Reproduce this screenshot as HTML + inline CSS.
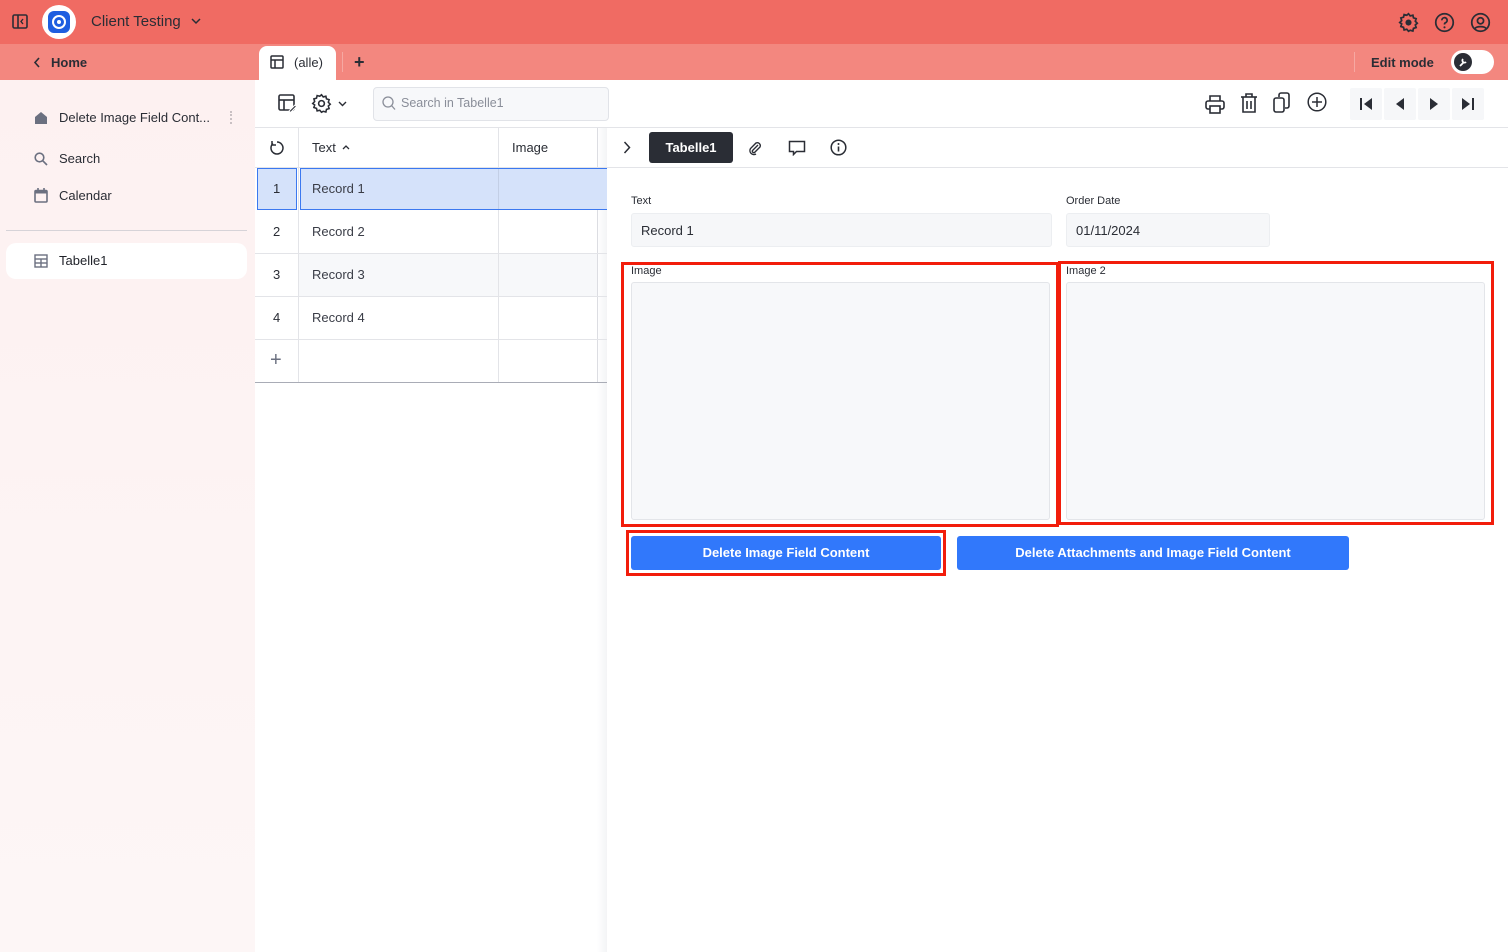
<!DOCTYPE html>
<html><head><meta charset="utf-8"><style>
*{box-sizing:border-box;margin:0;padding:0}
body{width:1508px;height:952px;overflow:hidden;font-family:"Liberation Sans",sans-serif;color:#2a2d35;background:#fff;position:relative;font-size:13px}
.abs{position:absolute}
svg{display:block}
</style></head><body>
<div class="abs" style="left:0;top:0;width:1508px;height:44px;background:#f06b63"></div>
<div class="abs" style="left:0;top:44px;width:1508px;height:36px;background:#f3877f"></div>
<svg class="abs" style="left:12px;top:14px" width="17" height="16" viewBox="0 0 17 16"><rect x="1" y="1" width="14" height="13" rx="1.5" fill="none" stroke="#2a2d35" stroke-width="1.6"/><line x1="6" y1="1" x2="6" y2="14" stroke="#2a2d35" stroke-width="1.6"/><path d="M11 5l-2 2.5 2 2.5" fill="none" stroke="#2a2d35" stroke-width="1.4"/></svg>
<div class="abs" style="left:42px;top:5px;width:34px;height:34px;border-radius:50%;background:#fff"></div>
<div class="abs" style="left:48px;top:11px;width:22px;height:22px;border-radius:6px;background:#1e5ee0"></div>
<div class="abs" style="left:52px;top:15px;width:14px;height:14px;border-radius:50%;border:2.5px solid #fff"></div>
<div class="abs" style="left:57px;top:20px;width:4px;height:4px;border-radius:50%;background:#fff"></div>
<div class="abs" style="left:91px;top:13px;font-size:15px;color:#2a2d35">Client Testing</div>
<svg class="abs" style="left:191px;top:18px" width="10" height="7"><path d="M1 1l4 4 4-4" fill="none" stroke="#2a2d35" stroke-width="1.5"/></svg>
<svg class="abs" style="left:1398px;top:12px" width="21" height="21" viewBox="0 0 24 24"><path d="M12 2l2 2.5 3-.8.7 3 3 .9-.9 3 2.2 2.2-2.2 2 .9 3-3 .9-.7 3-3-.8L12 22l-2-2.3-3 .8-.7-3-3-.9.9-3L2 12l2.2-2.2-.9-3 3-.9.7-3 3 .8z" fill="none" stroke="#2a2d35" stroke-width="2"/><circle cx="12" cy="12" r="3.5" fill="#2a2d35"/></svg>
<svg class="abs" style="left:1434px;top:12px" width="21" height="21" viewBox="0 0 24 24"><circle cx="12" cy="12" r="10" fill="none" stroke="#2a2d35" stroke-width="2"/><path d="M9 9.5a3 3 0 1 1 4 2.8c-.8.4-1 1-1 2" fill="none" stroke="#2a2d35" stroke-width="2"/><circle cx="12" cy="17.5" r="1.2" fill="#2a2d35"/></svg>
<svg class="abs" style="left:1470px;top:12px" width="21" height="21" viewBox="0 0 24 24"><circle cx="12" cy="12" r="10" fill="none" stroke="#2a2d35" stroke-width="2"/><circle cx="12" cy="10" r="3.5" fill="none" stroke="#2a2d35" stroke-width="2"/><path d="M5.5 19c2-3 11-3 13 0" fill="none" stroke="#2a2d35" stroke-width="2"/></svg>
<svg class="abs" style="left:33px;top:57px" width="8" height="11"><path d="M6 1L2 5.5 6 10" fill="none" stroke="#2a2d35" stroke-width="1.6"/></svg>
<div class="abs" style="left:51px;top:55px;font-size:13px;font-weight:bold;color:#2a2d35">Home</div>
<div class="abs" style="left:259px;top:46px;width:77px;height:34px;background:#fff;border-radius:8px 8px 0 0"></div>
<svg class="abs" style="left:270px;top:55px" width="14" height="14"><rect x="1" y="1" width="12" height="12" rx="1" fill="none" stroke="#2a2d35" stroke-width="1.5"/><line x1="1" y1="5" x2="13" y2="5" stroke="#2a2d35" stroke-width="1.5"/><line x1="5" y1="5" x2="5" y2="13" stroke="#2a2d35" stroke-width="1.5"/></svg>
<div class="abs" style="left:294px;top:55px;font-size:13px;color:#2a2d35">(alle)</div>
<div class="abs" style="left:342px;top:52px;width:1px;height:20px;background:#f6a8a2"></div>
<div class="abs" style="left:354px;top:52px;font-size:18px;font-weight:bold;color:#2a2d35">+</div>
<div class="abs" style="left:1354px;top:52px;width:1px;height:20px;background:#f6a8a2"></div>
<div class="abs" style="left:1371px;top:55px;font-size:13px;font-weight:bold;color:#2a2d35">Edit mode</div>
<div class="abs" style="left:1451px;top:50px;width:43px;height:24px;border-radius:12px;background:#fff"></div>
<div class="abs" style="left:1454px;top:53px;width:18px;height:18px;border-radius:50%;background:#2a2d35"></div>
<svg class="abs" style="left:1457px;top:56px" width="12" height="12"><path d="M3 10l4-4M6 3a2 2 0 1 0 3 3" stroke="#fff" stroke-width="1.8" fill="none"/></svg>
<div class="abs" style="left:0;top:80px;width:255px;height:872px;background:linear-gradient(#fdf1f1,#fdf6f6)"></div>
<svg class="abs" style="left:34px;top:111px" width="14" height="14"><path d="M1 6L7 1l6 5v7H1z" fill="#6b7080"/></svg>
<div class="abs" style="left:59px;top:110px;font-size:13px">Delete Image Field Cont...</div>
<div class="abs" style="left:230px;top:111px;width:2px;height:13px;border-left:2px dotted #c9c0c3"></div>
<svg class="abs" style="left:34px;top:152px" width="14" height="14"><circle cx="5.5" cy="5.5" r="4.3" fill="none" stroke="#6b7080" stroke-width="1.6"/><line x1="8.7" y1="8.7" x2="13" y2="13" stroke="#6b7080" stroke-width="1.6"/></svg>
<div class="abs" style="left:59px;top:151px;font-size:13px">Search</div>
<svg class="abs" style="left:34px;top:188px" width="14" height="15"><rect x="1" y="2.5" width="12" height="11.5" rx="1" fill="none" stroke="#6b7080" stroke-width="1.6"/><rect x="1" y="2.5" width="12" height="3" fill="#6b7080"/><line x1="4" y1="0" x2="4" y2="3" stroke="#6b7080" stroke-width="1.6"/><line x1="10" y1="0" x2="10" y2="3" stroke="#6b7080" stroke-width="1.6"/></svg>
<div class="abs" style="left:59px;top:188px;font-size:13px">Calendar</div>
<div class="abs" style="left:6px;top:230px;width:241px;height:1px;background:#d6d3d8"></div>
<div class="abs" style="left:6px;top:243px;width:241px;height:36px;background:#fff;border-radius:10px"></div>
<svg class="abs" style="left:34px;top:254px" width="14" height="14"><rect x="1" y="1" width="12" height="12" fill="none" stroke="#6b7080" stroke-width="1.4"/><line x1="1" y1="5" x2="13" y2="5" stroke="#6b7080" stroke-width="1.4"/><line x1="1" y1="9" x2="13" y2="9" stroke="#6b7080" stroke-width="1.4"/><line x1="7" y1="5" x2="7" y2="13" stroke="#6b7080" stroke-width="1.4"/></svg>
<div class="abs" style="left:59px;top:253px;font-size:13px;color:#1f2128">Tabelle1</div>
<div class="abs" style="left:255px;top:127px;width:1253px;height:1px;background:#e3e4e8"></div>
<svg class="abs" style="left:278px;top:94px" width="19" height="19"><rect x="1" y="1" width="15" height="15" rx="1.5" fill="none" stroke="#2a2d35" stroke-width="1.6"/><line x1="1" y1="6" x2="16" y2="6" stroke="#2a2d35" stroke-width="1.6"/><line x1="6" y1="6" x2="6" y2="16" stroke="#2a2d35" stroke-width="1.6"/><path d="M11 17l6-6 1.5 1.5-6 6z" fill="#2a2d35" stroke="#fff"/></svg>
<svg class="abs" style="left:311px;top:93px" width="21" height="21" viewBox="0 0 24 24"><path d="M12 2l2 2.5 3-.8.7 3 3 .9-.9 3 2.2 2.2-2.2 2 .9 3-3 .9-.7 3-3-.8L12 22l-2-2.3-3 .8-.7-3-3-.9.9-3L2 12l2.2-2.2-.9-3 3-.9.7-3 3 .8z" fill="none" stroke="#2a2d35" stroke-width="1.8"/><circle cx="12" cy="12" r="3.3" fill="none" stroke="#2a2d35" stroke-width="1.8"/></svg>
<svg class="abs" style="left:338px;top:101px" width="9" height="6"><path d="M1 1l3.5 3.5L8 1" fill="none" stroke="#2a2d35" stroke-width="1.4"/></svg>
<div class="abs" style="left:373px;top:87px;width:236px;height:34px;border:1px solid #e1e3e8;border-radius:4px;background:#f7f8fa"></div>
<svg class="abs" style="left:382px;top:96px" width="14" height="15"><circle cx="6" cy="6" r="5" fill="none" stroke="#8a8e99" stroke-width="1.3"/><line x1="9.5" y1="9.5" x2="13" y2="13.5" stroke="#8a8e99" stroke-width="1.3"/></svg>
<div class="abs" style="left:401px;top:96px;font-size:12.5px;color:#8a8e99">Search in Tabelle1</div>
<svg class="abs" style="left:1205px;top:94px" width="20" height="20"><path d="M5 7V2h10v5" fill="none" stroke="#2a2d35" stroke-width="1.6"/><rect x="1" y="7" width="18" height="8" rx="2" fill="none" stroke="#2a2d35" stroke-width="1.6"/><rect x="5" y="12" width="10" height="7" fill="#fff" stroke="#2a2d35" stroke-width="1.6"/></svg>
<svg class="abs" style="left:1240px;top:93px" width="18" height="20"><line x1="1" y1="4" x2="17" y2="4" stroke="#2a2d35" stroke-width="1.6"/><path d="M6 4V1h6v3M3 4v15h12V4" fill="none" stroke="#2a2d35" stroke-width="1.6"/><line x1="7" y1="8" x2="7" y2="16" stroke="#2a2d35" stroke-width="1.6"/><line x1="11" y1="8" x2="11" y2="16" stroke="#2a2d35" stroke-width="1.6"/></svg>
<svg class="abs" style="left:1273px;top:92px" width="20" height="22"><rect x="1" y="6" width="10" height="14" rx="2" fill="none" stroke="#2a2d35" stroke-width="1.6"/><path d="M6 5V3a2 2 0 0 1 2-2h6a2 2 0 0 1 2 2v11a2 2 0 0 1-2 2h-2" fill="none" stroke="#2a2d35" stroke-width="1.6"/></svg>
<svg class="abs" style="left:1307px;top:92px" width="20" height="20"><circle cx="10" cy="10" r="8.8" fill="none" stroke="#2a2d35" stroke-width="1.5"/><line x1="10" y1="5" x2="10" y2="15" stroke="#2a2d35" stroke-width="1.5"/><line x1="5" y1="10" x2="15" y2="10" stroke="#2a2d35" stroke-width="1.5"/></svg>
<div class="abs" style="left:1350px;top:88px;width:32px;height:32px;background:#f6f7f9;border-radius:2px"></div>
<div class="abs" style="left:1384px;top:88px;width:32px;height:32px;background:#f6f7f9;border-radius:2px"></div>
<div class="abs" style="left:1418px;top:88px;width:32px;height:32px;background:#f6f7f9;border-radius:2px"></div>
<div class="abs" style="left:1452px;top:88px;width:32px;height:32px;background:#f6f7f9;border-radius:2px"></div>
<svg class="abs" style="left:1359px;top:97px" width="14" height="14"><rect x="1" y="1" width="2" height="12" fill="#2a2d35"/><path d="M13 1v12L5 7z" fill="#2a2d35"/></svg>
<svg class="abs" style="left:1394px;top:97px" width="12" height="14"><path d="M10 1v12L2 7z" fill="#2a2d35"/></svg>
<svg class="abs" style="left:1428px;top:97px" width="12" height="14"><path d="M2 1v12l8-6z" fill="#2a2d35"/></svg>
<svg class="abs" style="left:1461px;top:97px" width="14" height="14"><path d="M1 1v12l8-6z" fill="#2a2d35"/><rect x="11" y="1" width="2" height="12" fill="#2a2d35"/></svg>
<div class="abs" style="left:255px;top:128px;width:352px;height:255px;background:#fff"></div>
<div class="abs" style="left:299px;top:253px;width:299px;height:43px;background:#f7f8fa"></div>
<div class="abs" style="left:298px;top:128px;width:1px;height:255px;background:#e3e4e8"></div>
<div class="abs" style="left:498px;top:128px;width:1px;height:255px;background:#e3e4e8"></div>
<div class="abs" style="left:597px;top:128px;width:10px;height:824px;background:linear-gradient(90deg,#fff,#f3f4f6)"></div>
<div class="abs" style="left:597px;top:128px;width:1px;height:255px;background:#dcdde2"></div>
<div class="abs" style="left:255px;top:167px;width:352px;height:1px;background:#e3e4e8"></div>
<div class="abs" style="left:255px;top:253px;width:352px;height:1px;background:#e3e4e8"></div>
<div class="abs" style="left:255px;top:296px;width:352px;height:1px;background:#e3e4e8"></div>
<div class="abs" style="left:255px;top:339px;width:352px;height:1px;background:#e3e4e8"></div>
<div class="abs" style="left:255px;top:382px;width:352px;height:1px;background:#a9acb6"></div>
<div class="abs" style="left:257px;top:168px;width:40px;height:42px;background:#d5e2fa;border:1px solid #3b78f0"></div>
<div class="abs" style="left:300px;top:168px;width:307px;height:42px;background:#d5e2fa;border:1px solid #3b78f0;border-right:none"></div>
<div class="abs" style="left:498px;top:169px;width:1px;height:40px;background:#c3cfe6"></div>
<svg class="abs" style="left:269px;top:140px" width="16" height="16"><path d="M4 3.5A6 6 0 1 0 8 2" fill="none" stroke="#2a2d35" stroke-width="1.5"/><path d="M3 1v4h4" fill="none" stroke="#2a2d35" stroke-width="1.5"/></svg>
<div class="abs" style="left:312px;top:140px;font-size:13px">Text</div>
<svg class="abs" style="left:342px;top:145px" width="8" height="5"><path d="M1 4l3-3 3 3" fill="none" stroke="#2a2d35" stroke-width="1.3"/></svg>
<div class="abs" style="left:512px;top:140px;font-size:13px">Image</div>
<div class="abs" style="left:273px;top:181px;font-size:13px">1</div>
<div class="abs" style="left:312px;top:181px;font-size:13px;color:#3a3d47">Record 1</div>
<div class="abs" style="left:273px;top:224px;font-size:13px">2</div>
<div class="abs" style="left:312px;top:224px;font-size:13px;color:#3a3d47">Record 2</div>
<div class="abs" style="left:273px;top:267px;font-size:13px">3</div>
<div class="abs" style="left:312px;top:267px;font-size:13px;color:#3a3d47">Record 3</div>
<div class="abs" style="left:273px;top:310px;font-size:13px">4</div>
<div class="abs" style="left:312px;top:310px;font-size:13px;color:#3a3d47">Record 4</div>
<div class="abs" style="left:270px;top:349px;font-size:20px;color:#6b7080;font-weight:300">+</div>
<div class="abs" style="left:607px;top:167px;width:901px;height:1px;background:#e3e4e8"></div>
<svg class="abs" style="left:623px;top:141px" width="8" height="13"><path d="M1.5 1l5 5.5-5 5.5" fill="none" stroke="#2a2d35" stroke-width="1.5"/></svg>
<div class="abs" style="left:649px;top:132px;width:84px;height:31px;background:#2a2d35;border-radius:3px;color:#fff;font-weight:bold;font-size:13px;text-align:center;line-height:31px">Tabelle1</div>
<svg class="abs" style="left:747px;top:140px" width="16" height="16"><path d="M11 5l-5.5 5.5a1.5 1.5 0 0 0 2 2L13 7a3 3 0 0 0-4-4L3.5 8.5a4 4 0 0 0 5.5 5.5" fill="none" stroke="#2a2d35" stroke-width="1.4"/></svg>
<svg class="abs" style="left:788px;top:140px" width="18" height="16"><path d="M1.5 1.5h15v10h-8l-3 3v-3h-4z" fill="none" stroke="#2a2d35" stroke-width="1.5"/></svg>
<svg class="abs" style="left:830px;top:139px" width="17" height="17"><circle cx="8.5" cy="8.5" r="7.3" fill="none" stroke="#2a2d35" stroke-width="1.5"/><line x1="8.5" y1="7.5" x2="8.5" y2="12.5" stroke="#2a2d35" stroke-width="1.6"/><circle cx="8.5" cy="5" r="1" fill="#2a2d35"/></svg>
<div class="abs" style="left:631px;top:195px;font-size:11px">Text</div>
<div class="abs" style="left:631px;top:213px;width:421px;height:34px;background:#f6f7f9;border:1px solid #eceef1;border-radius:3px;padding:9px 0 0 9px;font-size:13px;color:#2a2d35">Record 1</div>
<div class="abs" style="left:1066px;top:195px;font-size:11px">Order Date</div>
<div class="abs" style="left:1066px;top:213px;width:204px;height:34px;background:#f6f7f9;border:1px solid #eceef1;border-radius:3px;padding:9px 0 0 9px;font-size:13px;color:#2a2d35">01/11/2024</div>
<div class="abs" style="left:631px;top:265px;font-size:11px">Image</div>
<div class="abs" style="left:631px;top:282px;width:419px;height:238px;background:#f7f8fa;border:1px solid #e3e5e9;border-radius:3px"></div>
<div class="abs" style="left:1066px;top:265px;font-size:11px">Image 2</div>
<div class="abs" style="left:1066px;top:282px;width:419px;height:238px;background:#f7f8fa;border:1px solid #e3e5e9;border-radius:3px"></div>
<div class="abs" style="left:621px;top:262px;width:438px;height:265px;border:3px solid #f21d0b"></div>
<div class="abs" style="left:1058px;top:261px;width:436px;height:264px;border:3px solid #f21d0b"></div>
<div class="abs" style="left:631px;top:536px;width:310px;height:34px;background:#3178fb;border-radius:3px;color:#fff;font-size:13px;font-weight:bold;text-align:center;line-height:34px">Delete Image Field Content</div>
<div class="abs" style="left:626px;top:530px;width:320px;height:46px;border:3px solid #f21d0b"></div>
<div class="abs" style="left:957px;top:536px;width:392px;height:34px;background:#3178fb;border-radius:3px;color:#fff;font-size:13px;font-weight:bold;text-align:center;line-height:34px">Delete Attachments and Image Field Content</div>
</body></html>
